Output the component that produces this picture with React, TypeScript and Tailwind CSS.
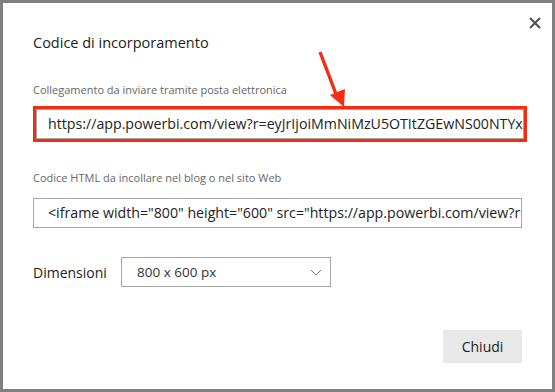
import React from "react";

export default function App() {
  const font = { fontFamily: '"Open Sans", "Noto Sans", sans-serif' };
  return (
    <div className="w-[555px] h-[392px] bg-[#808080] p-[3px]" style={font}>
      <div className="relative w-full h-full bg-white pl-[30px] pr-[30px] flex flex-col">
        <button className="absolute top-[14px] right-[11px] w-[12px] h-[12px] flex items-center justify-center">
          <svg width="12" height="12" viewBox="0 0 12 12">
            <path d="M1 1 L11 11 M11 1 L1 11" stroke="#555" strokeWidth="2.2" />
          </svg>
        </button>
        <svg className="absolute left-[310px] top-[42px]" width="40" height="66" viewBox="310 42 40 66">
          <line x1="317" y1="49" x2="333" y2="91" stroke="#f52c14" strokeWidth="3.4" />
          <polygon points="327,92 342,86 341,104" fill="#f52c14" />
        </svg>
        <div className="mt-[29px] text-[14.5px] leading-[22px] text-[#222]">Codice di incorporamento</div>
        <div className="mt-[28px] text-[11px] leading-[16px] text-[#666]">
          Collegamento da inviare tramite posta elettronica
        </div>
        <div className="mt-[8px] w-[494px] shrink-0 border-[3px] border-[#f52c14]">
          <div className="h-[30px] border border-[#a6a6a6] pl-[11px] flex items-center overflow-hidden whitespace-nowrap text-[14.2px] text-[#222]">
            https://app.powerbi.com/view?r=eyJrIjoiMmNiMzU5OTItZGEwNS00NTYxLTg4
          </div>
        </div>
        <div className="mt-[28px] text-[11px] leading-[16px] text-[#666]">
          Codice HTML da incollare nel blog o nel sito Web
        </div>
        <div className="mt-[12px] w-[489px] h-[30px] shrink-0 border border-[#a6a6a6] pl-[14px] flex items-center overflow-hidden whitespace-nowrap text-[14.2px] text-[#222]">
          &lt;iframe width="800" height="600" src="https://app.powerbi.com/view?r=eyJrIjoi
        </div>
        <div className="mt-[29px] flex items-center">
          <div className="w-[88px] text-[14px] text-[#222]">Dimensioni</div>
          <div className="w-[210px] h-[30px] border border-[#a6a6a6] flex items-center justify-between pl-[15px] pr-[8px] text-[13.5px] text-[#333]">
            <span>800 x 600 px</span>
            <svg width="12" height="7" viewBox="0 0 12 7">
              <path d="M1 1 L6 6 L11 1" stroke="#777" strokeWidth="1" fill="none" />
            </svg>
          </div>
        </div>
        <div className="mt-[43px] w-[489px] flex justify-end">
          <div className="w-[79px] h-[33px] bg-[#e8e8e8] flex items-center justify-center text-[14px] text-[#222]">
            Chiudi
          </div>
        </div>
      </div>
    </div>
  );
}
